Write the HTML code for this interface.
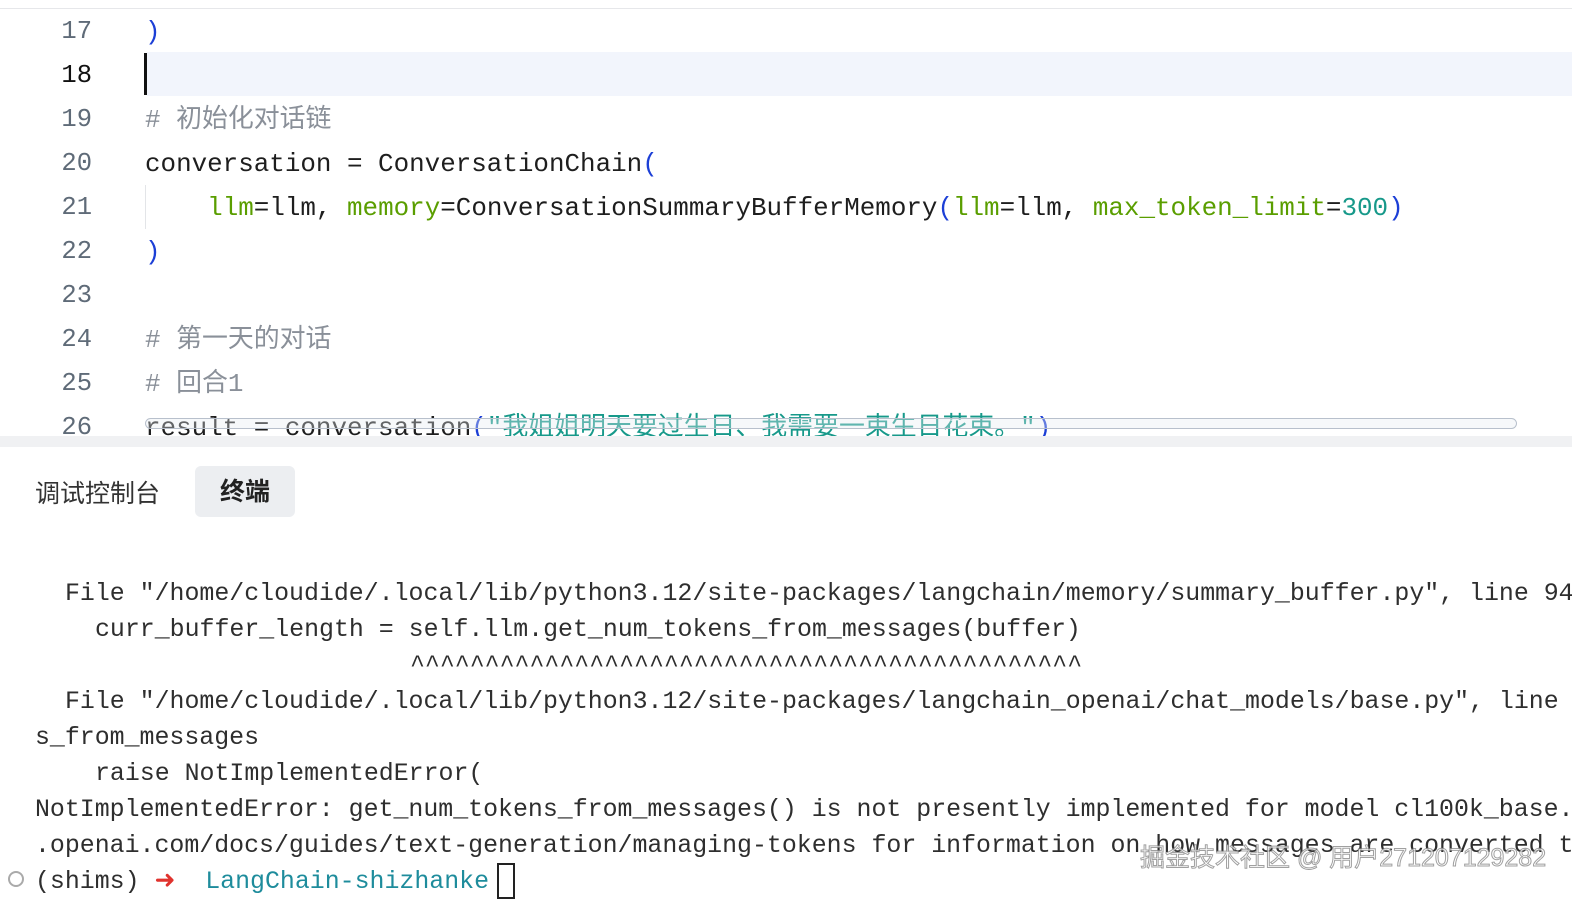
<!DOCTYPE html>
<html><head><meta charset="utf-8"><style>
body{margin:0;width:1572px;height:898px;background:#fff;position:relative;overflow:hidden;font-family:"Liberation Mono","Noto Sans CJK SC",monospace;}
.ln{position:absolute;left:40px;width:52px;text-align:right;font-size:25.5px;color:#5f6b78;line-height:44px;}
.c{position:absolute;left:145px;font-size:25.9px;line-height:44px;color:#1e1e1e;white-space:pre;}
.b{color:#1c3fd6}.g{color:#5a9e00}.s{color:#17998a}.cm{color:#8a9099}
.t{position:absolute;font-size:24.9px;line-height:36px;color:#2e2e2e;white-space:pre;}
</style></head><body>
<div style="position:absolute;left:0;top:8px;width:1572px;height:1px;background:#e6e7ea"></div>
<div style="position:absolute;left:147px;top:52px;width:1425px;height:44px;background:#f2f5fc"></div>
<div style="position:absolute;left:144px;top:53px;width:3px;height:42px;background:#111"></div>
<div style="position:absolute;left:145px;top:185px;width:1px;height:44px;background:#e3e5e8"></div>
<div class="ln" style="top:10px">17</div><div class="c b" style="top:10px">)</div>
<div class="ln" style="top:54px;color:#111">18</div>
<div class="ln" style="top:98px">19</div><div class="c cm" style="top:98px"># 初始化对话链</div>
<div class="ln" style="top:142px">20</div><div class="c" style="top:142px">conversation = ConversationChain<span class="b">(</span></div>
<div class="ln" style="top:186px">21</div><div class="c" style="top:186px">    <span class="g">llm</span>=llm, <span class="g">memory</span>=ConversationSummaryBufferMemory<span class="b">(</span><span class="g">llm</span>=llm, <span class="g">max_token_limit</span>=<span class="s">300</span><span class="b">)</span></div>
<div class="ln" style="top:230px">22</div><div class="c b" style="top:230px">)</div>
<div class="ln" style="top:274px">23</div>
<div class="ln" style="top:318px">24</div><div class="c cm" style="top:318px"># 第一天的对话</div>
<div class="ln" style="top:362px">25</div><div class="c cm" style="top:362px"># 回合1</div>
<div class="ln" style="top:406px">26</div><div class="c" style="top:406px">result = conversation<span class="b">(</span><span class="s">"我姐姐明天要过生日、我需要一束生日花束。"</span><span class="b">)</span></div>
<div style="position:absolute;left:145px;top:418px;width:1370px;height:9px;border:1.5px solid #b8c0cc;border-radius:6px;background:rgba(230,234,240,.35)"></div>
<div style="position:absolute;left:0;top:436px;width:1572px;height:11px;background:#f0f1f3"></div>
<div style="position:absolute;left:35px;top:476px;font-family:'Liberation Sans','Noto Sans CJK SC',sans-serif;font-size:25px;color:#333;line-height:36px">调试控制台</div>
<div style="position:absolute;left:195px;top:466px;width:100px;height:51px;background:#eceef1;border-radius:6px;text-align:center;font-family:'Liberation Sans','Noto Sans CJK SC',sans-serif;font-size:25px;font-weight:bold;color:#222;line-height:53px">终端</div>
<div class="t" style="left:65px;top:576px">File "/home/cloudide/.local/lib/python3.12/site-packages/langchain/memory/summary_buffer.py", line 94</div>
<div class="t" style="left:95px;top:612px">curr_buffer_length = self.llm.get_num_tokens_from_messages(buffer)</div>
<div class="t" style="left:410px;top:648px">^^^^^^^^^^^^^^^^^^^^^^^^^^^^^^^^^^^^^^^^^^^^^</div>
<div class="t" style="left:65px;top:684px">File "/home/cloudide/.local/lib/python3.12/site-packages/langchain_openai/chat_models/base.py", line </div>
<div class="t" style="left:35px;top:720px">s_from_messages</div>
<div class="t" style="left:95px;top:756px">raise NotImplementedError(</div>
<div class="t" style="left:35px;top:792px">NotImplementedError: get_num_tokens_from_messages() is not presently implemented for model cl100k_base.</div>
<div class="t" style="left:35px;top:828px">.openai.com/docs/guides/text-generation/managing-tokens for information on how messages are converted t</div>
<div style="position:absolute;left:8px;top:871px;width:12px;height:12px;border:2px solid #aaa;border-radius:50%"></div>
<div class="t" style="left:35px;top:864px">(shims) <span style="color:#e0332e">➜</span>  <span style="color:#1e8c9c">LangChain-shizhanke</span> </div>
<div style="position:absolute;left:497px;top:863px;width:14px;height:32px;border:2px solid #222"></div>
<div style="position:absolute;left:1140px;top:840px;font-family:'Liberation Sans','Noto Sans CJK SC',sans-serif;font-size:25px;color:rgba(255,255,255,.75);-webkit-text-stroke:1px rgba(120,120,120,.7);line-height:36px;white-space:nowrap">掘金技术社区 @ 用户271207129282</div>
</body></html>
